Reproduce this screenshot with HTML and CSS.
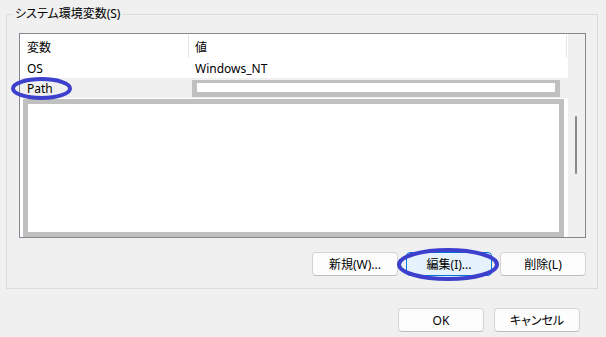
FILE: index.html
```html
<!DOCTYPE html>
<html lang="ja">
<head>
  <meta charset="UTF-8">
  <title>環境変数</title>
  <link rel="stylesheet" href="styles.css">
</head>
<body>
  <div class="dialog">
    <fieldset class="group">
      <legend>システム環境変数(S)</legend>

      <div class="listbox">
        <div class="list">
          <div class="row head">
            <div class="cell name">変数</div>
            <div class="cell value">値</div>
          </div>
          <div class="row">
            <div class="cell name">OS</div>
            <div class="cell value">Windows_NT</div>
          </div>
          <div class="row selected">
            <div class="cell name">Path</div>
            <div class="cell value"><span class="redact"></span></div>
          </div>
          <div class="redact-block"></div>
        </div>
        <div class="scrollbar"><div class="thumb"></div></div>
      </div>

      <div class="buttons">
        <button class="btn">新規(W)...</button>
        <button class="btn hover">編集(I)...</button>
        <button class="btn">削除(L)</button>
      </div>
    </fieldset>

    <div class="footer">
      <button class="btn">OK</button>
      <button class="btn">キャンセル</button>
    </div>
  </div>

  <!-- hand-drawn annotation marks -->
  <svg class="marks" width="606" height="337" viewBox="0 0 606 337">
    <ellipse cx="41.5" cy="88.5" rx="28.5" ry="9.5" />
    <ellipse cx="448" cy="264.5" rx="49" ry="14.5" />
  </svg>
</body>
</html>
```

FILE: styles.css
```css
* {
  box-sizing: border-box;
}

body {
  margin: 0;
  width: 606px;
  height: 337px;
  background: #f0f0f0;
  color: #000;
  font-family: "Noto Sans", "Noto Sans CJK JP", sans-serif;
  font-size: 12px;
  font-feature-settings: "palt";
  position: relative;
  overflow: hidden;
}

.dialog {
  padding-left: 6px;
}

/* group box */
.group {
  width: 592px;
  margin: 5px 0 0 0;
  padding: 10px 11px 12px 12px;
  border: 1px solid #dcdcdc;
  min-inline-size: 0;
}

.group legend {
  margin-left: -6px;
  padding: 0 2px;
  line-height: 18px;
}

/* list view */
.listbox {
  display: flex;
  width: 567px;
  height: 205px;
  border: 1px solid #828790;
  background: #fff;
}

.list {
  width: 548px;
}

.row {
  display: flex;
  align-items: center;
  height: 20px;
}

.row.head {
  height: 24px;
}

.cell.name {
  width: 169px;
  padding-left: 7px;
}

.cell.value {
  flex: 1;
  padding-left: 6px;
}

.head .cell {
  align-self: stretch;
  display: flex;
  align-items: center;
  margin-top: 1px;
  border-right: 1px solid #e5e5e5;
}

.head .cell.name {
  width: 169px;
}

.head .cell.value {
  flex: none;
  width: 378px;
}

.row.selected {
  background: #f0f0f0;
}

.row.selected .cell.value {
  padding-left: 3px;
  align-self: stretch;
  padding-top: 2px;
}

.redact {
  display: block;
  width: 368px;
  height: 17px;
  border: solid #c0c0c0;
  border-width: 3px 5px 5px 5px;
  background: #fff;
}

.redact-block {
  width: 541px;
  height: 138px;
  margin: 1px 0 0 3px;
  border: 5px solid #c0c0c0;
  background: #fff;
}

.scrollbar {
  width: 17px;
  background: #f0f0f0;
  padding: 82px 0 0 7px;
}

.thumb {
  width: 2px;
  height: 58px;
  border-radius: 1px;
  background: #8b8b8b;
}

/* buttons */
.buttons {
  display: flex;
  justify-content: flex-end;
  gap: 8px;
  margin-top: 14px;
}

.btn {
  width: 86px;
  height: 24px;
  padding: 0;
  font: inherit;
  font-feature-settings: "palt";
  color: #000;
  background: #fdfdfd;
  border: 1px solid #d3d3d3;
  border-bottom-color: #bdbdbd;
  border-radius: 4px;
}

.btn.hover {
  background: #e5f1fb;
  border-color: #0078d4;
}

.footer {
  display: flex;
  justify-content: flex-end;
  gap: 10px;
  margin-top: 19px;
  padding-right: 26px;
}

/* annotation overlay */
.marks {
  position: absolute;
  left: 0;
  top: 0;
  pointer-events: none;
}

.marks ellipse {
  fill: none;
  stroke: #3c40cc;
  stroke-width: 4;
}
```
